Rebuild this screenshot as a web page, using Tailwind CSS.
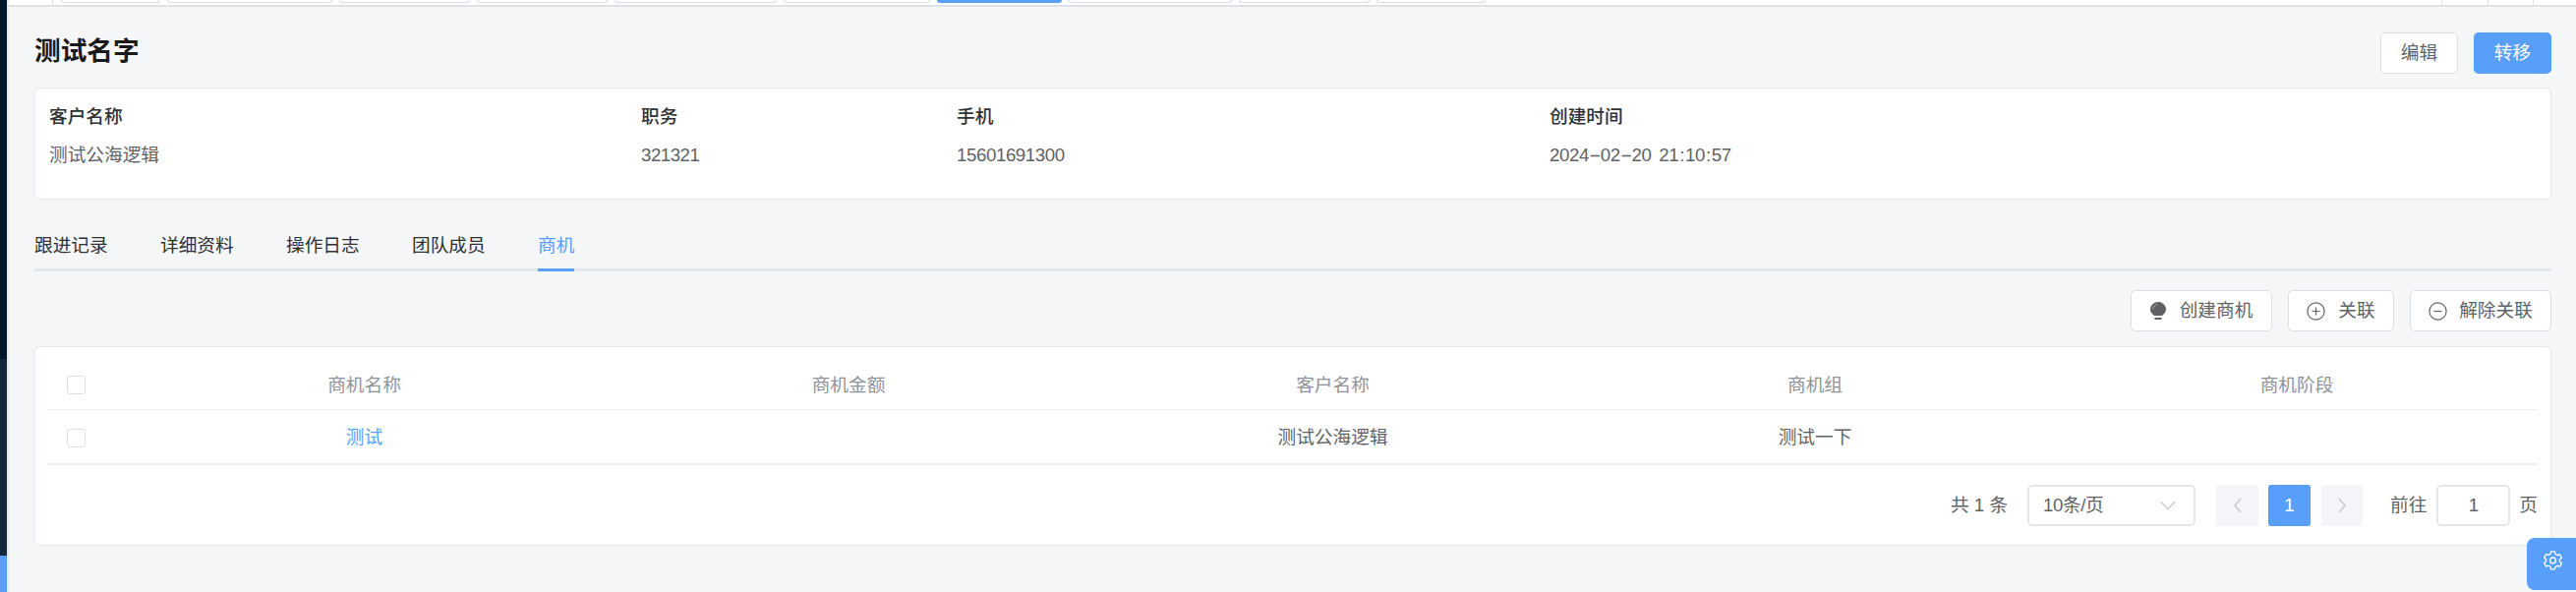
<!DOCTYPE html>
<html lang="zh">
<head>
  <meta charset="UTF-8" />
  <title>商机</title>
  <script src="https://cdn.jsdelivr.net/npm/@tailwindcss/browser@4"></script>
</head>
<body class="bg-[#f5f6f8] font-['Liberation_Sans','Noto_Sans_CJK_SC',sans-serif] text-[18.67px] text-[#606266]">
  <div class="flex h-[602px] w-[2620px] overflow-hidden">
    <!-- 侧边栏 -->
    <aside class="flex w-[9px] shrink-0 flex-col border-r-2 border-[#e6e8ec]">
      <div class="h-[365px] bg-[#00152a]"></div>
      <div class="flex-1 bg-[#13273c]"></div>
      <div class="h-[37px] bg-[#579ffb]"></div>
    </aside>

    <div class="relative flex min-w-0 flex-1 flex-col">
      <!-- 顶部标签 -->
      <div class="flex h-[7px] shrink-0 overflow-hidden border-b-2 border-[#dfe1e6] bg-white">
        <div class="h-full w-[45px] border-r border-[#dfe1e6]"></div>
        <div class="ml-[8px] flex h-[3px] gap-[7px]">
          <div class="w-[101px] rounded-b border border-t-0 border-[#d8dce5]"></div>
          <div class="w-[168px] rounded-b border border-t-0 border-[#d8dce5]"></div>
          <div class="w-[133px] rounded-b border border-t-0 border-[#d8dce5]"></div>
          <div class="w-[133px] rounded-b border border-t-0 border-[#d8dce5]"></div>
          <div class="w-[165px] rounded-b border border-t-0 border-[#d8dce5]"></div>
          <div class="w-[149px] rounded-b border border-t-0 border-[#d8dce5]"></div>
          <div class="w-[127px] rounded-b bg-[#579ffb]"></div>
          <div class="w-[166px] rounded-b border border-t-0 border-[#d8dce5]"></div>
          <div class="w-[133px] rounded-b border border-t-0 border-[#d8dce5]"></div>
          <div class="w-[111px] rounded-b border border-t-0 border-[#d8dce5]"></div>
        </div>
        <div class="ml-auto flex h-full">
          <div class="w-[47px] border-l border-[#dfe1e6]"></div>
          <div class="w-[46px] border-l border-[#dfe1e6]"></div>
          <div class="w-[44px] border-l border-[#dfe1e6]"></div>
        </div>
      </div>

      <main class="flex flex-1 flex-col pl-[26px] pr-[25px]">
        <!-- 标题 -->
        <div class="flex h-[82px] shrink-0 items-center justify-between pb-[14px] pt-[26px]">
          <h1 class="mb-[4px] text-[26.67px] font-semibold text-[#1a1a1a]">测试名字</h1>
          <div class="flex gap-[16px]">
            <button class="h-[42px] w-[79px] rounded-[5px] border border-[#dcdfe6] bg-white">编辑</button>
            <button class="h-[42px] w-[79px] rounded-[5px] bg-[#579ffb] text-white">转移</button>
          </div>
        </div>

        <!-- 基本信息 -->
        <section class="grid h-[114px] shrink-0 grid-cols-[602px_321px_603px_1fr] rounded-[5px] border border-[#e6e8ec] bg-white pl-[14px] pt-[17px]">
          <div><p class="font-medium leading-[24px] text-[#303133]">客户名称</p><p class="mt-[15px] leading-[24px]">测试公海逻辑</p></div>
          <div><p class="font-medium leading-[24px] text-[#303133]">职务</p><p class="mt-[15px] leading-[24px] tracking-[-0.5px]">321321</p></div>
          <div><p class="font-medium leading-[24px] text-[#303133]">手机</p><p class="mt-[15px] leading-[24px] tracking-[-0.4px]">15601691300</p></div>
          <div><p class="font-medium leading-[24px] text-[#303133]">创建时间</p><p class="mt-[15px] leading-[24px] tracking-[-0.4px] [word-spacing:3px]">2024<span class="inline-block scale-x-[2] px-[3px]">-</span>02<span class="inline-block scale-x-[2] px-[3px]">-</span>20 21<span class="px-[1px]">:</span>10<span class="px-[1px]">:</span>57</p></div>
        </section>

        <!-- 页签 -->
        <nav class="mt-[13px] flex h-[60px] shrink-0 items-end gap-[53.4px] border-b-[3px] border-[#e4e7ed] text-[#303133]">
          <a class="h-[45px] leading-[44px]">跟进记录</a>
          <a class="h-[45px] leading-[44px]">详细资料</a>
          <a class="h-[45px] leading-[44px]">操作日志</a>
          <a class="h-[45px] leading-[44px]">团队成员</a>
          <a class="-mb-[3px] h-[48px] border-b-[3px] border-[#579ffb] leading-[44px] text-[#579ffb]">商机</a>
        </nav>

        <!-- 操作按钮 -->
        <div class="mt-[19px] flex shrink-0 justify-end gap-[16px]">
          <button class="flex h-[42px] w-[144px] items-center justify-center gap-[14px] rounded-[5px] border border-[#dcdfe6] bg-white">
            <svg class="h-[18px] w-[16px]" viewBox="0 0 16 18"><path fill="#5f6165" d="M8 0a8 7.600 0 0 0-8 7.600c0 2.800 1.700 4.700 3.900 6.400h8.200c2.200-1.700 3.900-3.600 3.900-6.400A8 7.600 0 0 0 8 0z"/><path fill="none" stroke="#a9abaf" stroke-width="1" d="M2.800 7.300C3 4.600 4.800 2.800 7.200 2.500"/><path fill="#5f6165" d="M4.500 16h7v2h-7z"/></svg>
            <span>创建商机</span>
          </button>
          <button class="flex h-[42px] w-[108px] items-center justify-center gap-[13px] rounded-[5px] border border-[#dcdfe6] bg-white">
            <svg class="h-[19px] w-[19px]" viewBox="0 0 19 19" fill="none" stroke="#606266" stroke-width="1.200"><circle cx="9.500" cy="9.500" r="8.600"/><path d="M9.500 5.500v8M5.500 9.500h8"/></svg>
            <span>关联</span>
          </button>
          <button class="flex h-[42px] w-[144px] items-center justify-center gap-[12px] rounded-[5px] border border-[#dcdfe6] bg-white">
            <svg class="h-[19px] w-[19px]" viewBox="0 0 19 19" fill="none" stroke="#606266" stroke-width="1.200"><circle cx="9.500" cy="9.500" r="8.600"/><path d="M5.500 9.500h8"/></svg>
            <span>解除关联</span>
          </button>
        </div>

        <!-- 表格 -->
        <section class="mt-[15px] h-[203px] shrink-0 rounded-[5px] border border-[#e6e8ec] bg-white px-[13px] pt-[14px]">
          <div class="grid h-[50px] grid-cols-[76px_491px_494px_491px_490px_1fr] items-center border-b border-[#ebeef5] text-center text-[#909399]">
            <span class="ml-[19px] h-[19px] w-[19px] rounded-[3px] border border-[#dcdfe6]"></span>
            <span>商机名称</span><span>商机金额</span><span>客户名称</span><span>商机组</span><span>商机阶段</span>
          </div>
          <div class="grid h-[56px] grid-cols-[76px_491px_494px_491px_490px_1fr] items-center border-b-2 border-[#ebeef5] pt-[2px] text-center">
            <span class="ml-[19px] h-[19px] w-[19px] rounded-[3px] border border-[#dcdfe6]"></span>
            <span class="text-[#579ffb]">测试</span><span></span><span>测试公海逻辑</span><span>测试一下</span><span></span>
          </div>
          <!-- 分页 -->
          <div class="mt-[20px] flex h-[42px] items-center justify-end whitespace-nowrap">
            <span class="w-[78px]">共 1 条</span>
            <div class="flex h-[42px] w-[171px] items-center justify-between rounded-[5px] border-2 border-[#e4e7ed] pl-[14px] pr-[18px]">
              <span class="tracking-[-0.4px]">10条/页</span>
              <svg class="h-[10px] w-[16px]" viewBox="0 0 16 10" fill="none" stroke="#c0c4cc" stroke-width="1.200"><path d="M1 1.500l7 7 7-7"/></svg>
            </div>
            <button class="ml-[21px] flex h-[42px] w-[43px] items-center justify-center rounded-[3px] bg-[#f4f5f8]"><svg class="h-[16px] w-[10px]" viewBox="0 0 10 16" fill="none" stroke="#c0c4cc" stroke-width="1.200"><path d="M8 1L2 8l6 7"/></svg></button>
            <button class="ml-[10px] h-[42px] w-[43px] rounded-[3px] bg-[#579ffb] text-white">1</button>
            <button class="ml-[11px] flex h-[42px] w-[42px] items-center justify-center rounded-[3px] bg-[#f4f5f8]"><svg class="h-[16px] w-[10px]" viewBox="0 0 10 16" fill="none" stroke="#c0c4cc" stroke-width="1.200"><path d="M2 1l6 7-6 7"/></svg></button>
            <span class="ml-[28px]">前往</span>
            <span class="ml-[10px] h-[42px] w-[75px] rounded-[5px] border-2 border-[#e4e7ed] text-center leading-[38px]">1</span>
            <span class="ml-[9px]">页</span>
          </div>
        </section>
      </main>

      <!-- 设置按钮 -->
      <button class="absolute right-0 top-[547px] flex h-[53px] w-[50px] items-center justify-center rounded-l-[8px] bg-[#579ffb] pl-[3px]">
        <svg class="-mt-[9px] h-[21px] w-[21px]" viewBox="0 0 22 22" fill="none" stroke="white" stroke-width="1.400" stroke-linejoin="round"><path d="M9 2h4l.7 2.700 1.900 1.100 2.700-.8 2 3.500-2 1.900v2.200l2 1.900-2 3.500-2.700-.8-1.900 1.100L13 20.800H9l-.7-2.700-1.900-1.100-2.700.8-2-3.500 2-1.900v-2.200l-2-1.900 2-3.500 2.700.8 1.900-1.100z"/><circle cx="11" cy="11.400" r="3"/></svg>
      </button>
    </div>
  </div>
</body>
</html>
